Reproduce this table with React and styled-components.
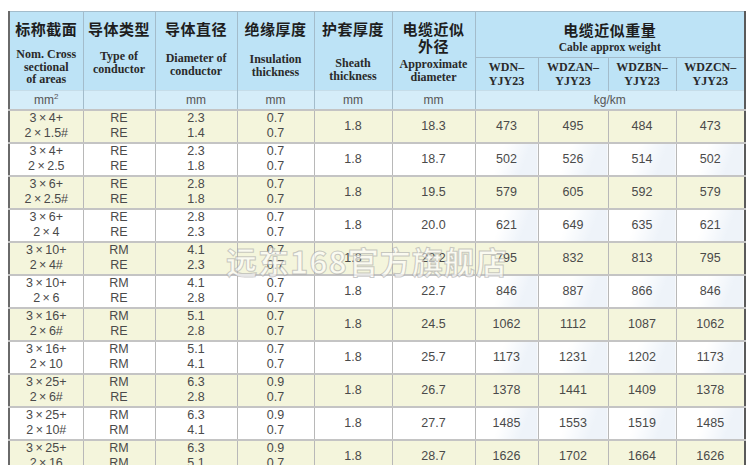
import React from 'react'
import styled, { createGlobalStyle } from 'styled-components'

const x = '\u2009×\u2009'

const rows = [
    { size: ['3' + x + '4+', '2' + x + '1.5#'], type: ['RE', 'RE'], dia: ['2.3', '1.4'], ins: ['0.7', '0.7'], od: '18.3', w: [473, 495, 484, 473] },
    { size: ['3' + x + '4+', '2' + x + '2.5'], type: ['RE', 'RE'], dia: ['2.3', '1.8'], ins: ['0.7', '0.7'], od: '18.7', w: [502, 526, 514, 502] },
    { size: ['3' + x + '6+', '2' + x + '2.5#'], type: ['RE', 'RE'], dia: ['2.8', '1.8'], ins: ['0.7', '0.7'], od: '19.5', w: [579, 605, 592, 579] },
    { size: ['3' + x + '6+', '2' + x + '4'], type: ['RE', 'RE'], dia: ['2.8', '2.3'], ins: ['0.7', '0.7'], od: '20.0', w: [621, 649, 635, 621] },
    { size: ['3' + x + '10+', '2' + x + '4#'], type: ['RM', 'RE'], dia: ['4.1', '2.3'], ins: ['0.7', '0.7'], od: '22.2', w: [795, 832, 813, 795] },
    { size: ['3' + x + '10+', '2' + x + '6'], type: ['RM', 'RE'], dia: ['4.1', '2.8'], ins: ['0.7', '0.7'], od: '22.7', w: [846, 887, 866, 846] },
    { size: ['3' + x + '16+', '2' + x + '6#'], type: ['RM', 'RE'], dia: ['5.1', '2.8'], ins: ['0.7', '0.7'], od: '24.5', w: [1062, 1112, 1087, 1062] },
    { size: ['3' + x + '16+', '2' + x + '10'], type: ['RM', 'RM'], dia: ['5.1', '4.1'], ins: ['0.7', '0.7'], od: '25.7', w: [1173, 1231, 1202, 1173] },
    { size: ['3' + x + '25+', '2' + x + '6#'], type: ['RM', 'RE'], dia: ['6.3', '2.8'], ins: ['0.9', '0.7'], od: '26.7', w: [1378, 1441, 1409, 1378] },
    { size: ['3' + x + '25+', '2' + x + '10#'], type: ['RM', 'RM'], dia: ['6.3', '4.1'], ins: ['0.9', '0.7'], od: '27.7', w: [1485, 1553, 1519, 1485] },
    { size: ['3' + x + '25+', '2' + x + '16'], type: ['RM', 'RM'], dia: ['6.3', '5.1'], ins: ['0.9', '0.7'], od: '28.7', w: [1626, 1702, 1664, 1626] },
]

const widths = [74, 72, 82, 77, 78, 83, 63, 70, 68, 69]

const heads = [
    { zh: ['标称截面'], en: ['Nom. Cross', 'sectional', 'of areas'], gap: 9 },
    { zh: ['导体类型'], en: ['Type of', 'conductor'], gap: 11 },
    { zh: ['导体直径'], en: ['Diameter of', 'conductor'], gap: 13 },
    { zh: ['绝缘厚度'], en: ['Insulation', 'thickness'], gap: 14 },
    { zh: ['护套厚度'], en: ['Sheath', 'thickness'], gap: 18 },
    { zh: ['电缆近似', '外径'], en: ['Approximate', 'diameter'], gap: 2 },
]

const models = ['WDN–', 'WDZAN–', 'WDZBN–', 'WDZCN–']

function App() {
    return (
        <Page>
            <GlobalStyle />
            <Sheet>
                <colgroup>
                    {widths.map((w, i) => <col key={i} style={{ width: w }} />)}
                </colgroup>
                <thead>
                    <tr style={{ height: 46 }}>
                        {heads.map((h) => (
                            <HeadCell key={h.zh[0]} rowSpan={2}>
                                {h.zh.map((z) => <ZhTitle key={z}>{z}</ZhTitle>)}
                                <EnTitle $gap={h.gap}>
                                    {h.en.map((e) => <div key={e}>{e}</div>)}
                                </EnTitle>
                            </HeadCell>
                        ))}
                        <HeadCell colSpan={4} $weight>
                            <ZhTitle>电缆近似重量</ZhTitle>
                            <EnSub>Cable approx weight</EnSub>
                        </HeadCell>
                    </tr>
                    <tr style={{ height: 33 }}>
                        {models.map((m) => (
                            <ModelCell key={m}>
                                <div>{m}</div>
                                <div>YJY23</div>
                            </ModelCell>
                        ))}
                    </tr>
                    <UnitRow>
                        <UnitCell>mm<sup>2</sup></UnitCell>
                        <UnitCell />
                        <UnitCell>mm</UnitCell>
                        <UnitCell>mm</UnitCell>
                        <UnitCell>mm</UnitCell>
                        <UnitCell>mm</UnitCell>
                        <UnitCell colSpan={4}>kg/km</UnitCell>
                    </UnitRow>
                </thead>
                <tbody>
                    {rows.map((r, i) => (
                        <Row key={i} $tint={i % 2 === 0}>
                            <Cell><Stack>{r.size.map((s) => <span key={s}>{s}</span>)}</Stack></Cell>
                            <Cell><Stack>{r.type.map((s, j) => <span key={j}>{s}</span>)}</Stack></Cell>
                            <Cell><Stack>{r.dia.map((s, j) => <span key={j}>{s}</span>)}</Stack></Cell>
                            <Cell><Stack>{r.ins.map((s, j) => <span key={j}>{s}</span>)}</Stack></Cell>
                            <Cell>1.8</Cell>
                            <Cell>{r.od}</Cell>
                            {r.w.map((w, j) => <Cell key={j} $weight $tint={i % 2 === 0}>{w}</Cell>)}
                        </Row>
                    ))}
                </tbody>
            </Sheet>
            <Watermark>远东168官方旗舰店</Watermark>
        </Page>
    )
}

export default App

const GlobalStyle = createGlobalStyle`
    html, body {
        margin: 0;
        padding: 0;
        background: #ffffff;
        overflow: hidden;
    }
`

const Page = styled.div`
    position: relative;
    width: 750px;
    height: 465px;
    padding: 11px 0 0 8px;
    box-sizing: border-box;
    overflow: hidden;
`

const Sheet = styled.table`
    width: 736px;
    table-layout: fixed;
    border-collapse: collapse;
    border-top: 1px solid #9a9a9a;
    border-left: 2px solid #6a6a6a;
    border-right: 2px solid #5a5a5a;
    font-family: "Liberation Sans", Arial, sans-serif;
`

const HeadCell = styled.th`
    background: #bde3f6;
    border: 1px solid #a3bccb;
    border-bottom: ${(p) => (p.$weight ? '1px solid #a3bccb' : 'none')};
    vertical-align: top;
    padding: ${(p) => (p.$weight ? '11px 0 0' : '10px 0 0')};
    text-align: center;
    color: #1e1e1e;
`

const ZhTitle = styled.div`
    font-family: "Liberation Serif", "Noto Sans CJK SC", serif;
    font-weight: bold;
    font-size: 15px;
    line-height: 17px;
    letter-spacing: 0.5px;
`

const EnTitle = styled.div`
    margin-top: ${(p) => p.$gap}px;
    font-family: "Liberation Serif", serif;
    font-weight: bold;
    font-size: 12px;
    line-height: 12.5px;
    color: #2a2a2a;
`

const EnSub = styled.div`
    margin-top: 1px;
    font-family: "Liberation Serif", serif;
    font-weight: bold;
    font-size: 11.5px;
    line-height: 12px;
    color: #2a2a2a;
`

const ModelCell = styled.th`
    background: #bde3f6;
    border: 1px solid #a3bccb;
    border-bottom: none;
    padding: 2px 0 0;
    vertical-align: top;
    font-family: "Liberation Serif", serif;
    font-weight: bold;
    font-size: 12px;
    line-height: 14px;
    color: #2a2a2a;
`

const UnitRow = styled.tr`
    height: 19px;
`

const UnitCell = styled.td`
    background: #d5edf9;
    border-left: 1px solid #a3bccb;
    border-right: 1px solid #a3bccb;
    border-top: 1px solid #c6dde9;
    text-align: center;
    font-size: 12px;
    color: #555;
    padding: 0;
    sup {
        font-size: 8px;
        vertical-align: 5px;
        line-height: 0;
    }
`

const Row = styled.tr`
    height: 33px;
    background: ${(p) => (p.$tint ? '#f4f5dc' : '#ffffff')};
`

const Cell = styled.td`
    border: 1px solid #b8b8b8;
    border-top: 2px solid #c4c4c4;
    padding: 0;
    text-align: center;
    vertical-align: middle;
    font-size: 12.5px;
    color: #4a4a4a;
    background: ${(p) => (p.$weight && !p.$tint ? 'linear-gradient(110deg, #ffffff 40%, #eef3f9 75%)' : 'transparent')};
`

const Stack = styled.div`
    display: flex;
    flex-direction: column;
    align-items: center;
    line-height: 15.5px;
`

const Watermark = styled.div`
    position: absolute;
    left: 226px;
    top: 238px;
    font-family: "Noto Sans CJK SC", "DejaVu Sans", sans-serif;
    font-weight: bold;
    font-size: 31px;
    letter-spacing: 1px;
    color: rgba(255, 255, 255, 0.6);
    -webkit-text-stroke: 1px rgba(150, 150, 150, 0.5);
    pointer-events: none;
`
